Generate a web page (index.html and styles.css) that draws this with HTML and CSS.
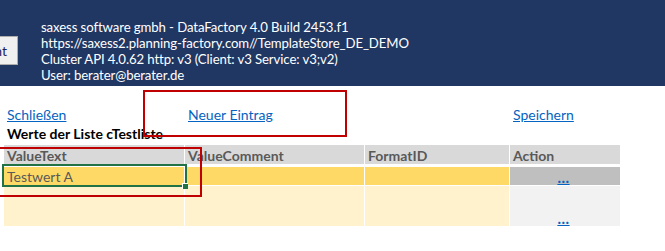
FILE: index.html
```html
<!DOCTYPE html>
<html lang="de">
<head>
    <meta charset="UTF-8">
    <title>DataFactory - Werte der Liste</title>
    <link rel="stylesheet" href="styles.css">
</head>
<body>
    <div class="banner">
        <button class="menu-btn">nt</button>
        <div class="info">
            <div>saxess software gmbh - DataFactory 4.0 Build 2453.f1</div>
            <div>https://saxess2.planning-factory.com//TemplateStore_DE_DEMO</div>
            <div>Cluster API 4.0.62 http: v3 (Client: v3 Service: v3;v2)</div>
            <div>User: berater@berater.de</div>
        </div>
    </div>

    <div class="sheet">
        <div class="grid links">
            <div class="cell"><a href="#">Schließen</a></div>
            <div class="cell"><a href="#">Neuer Eintrag</a></div>
            <div class="cell"></div>
            <div class="cell"><a href="#">Speichern</a></div>
        </div>
        <div class="title">Werte der Liste cTestliste</div>

        <div class="grid head">
            <div class="cell">ValueText</div>
            <div class="cell">ValueComment</div>
            <div class="cell">FormatID</div>
            <div class="cell">Action</div>
        </div>
        <div class="grid row row-active">
            <div class="cell selected">Testwert A</div>
            <div class="cell"></div>
            <div class="cell"></div>
            <div class="cell action"><a href="#">...</a></div>
        </div>
        <div class="grid row row-tall">
            <div class="cell"></div>
            <div class="cell"></div>
            <div class="cell"></div>
            <div class="cell action"><a href="#">...</a></div>
        </div>

        <!-- Markierungen -->
        <div class="mark mark-new"></div>
        <div class="mark mark-value"></div>
    </div>
</body>
</html>
```

FILE: styles.css
```css
body { margin: 0; font-family: Lato, "Open Sans", sans-serif; font-size: 13px; background: #fff; overflow: hidden; }
a { color: #0563c1; text-decoration: underline; }

.banner { background: #203764; height: 86px; display: flex; align-items: flex-start; }
.menu-btn { margin: 36px 0 0 -40px; width: 58px; height: 29px; padding: 0 10px 0 0; text-align: right; background: #f0f0f0; border: 1px solid #adadad; color: #1f1f5f; font-family: inherit; font-size: 14px; }
.info { color: #fff; padding: 19px 0 0 23px; line-height: 16px; font-size: 13.2px; letter-spacing: -0.1px; }

.sheet { position: relative; padding-left: 4px; height: 165px; }
.grid { display: grid; grid-template-columns: 180px 179px 144px 110px; column-gap: 1px; }
.cell { padding: 0 3px; display: flex; align-items: flex-end; white-space: nowrap; }

.links { height: 38px; font-size: 14px; }
.links .cell { padding-bottom: 1px; }
.title { height: 21px; font-weight: bold; font-size: 14px; color: #000; padding-left: 3px; line-height: 20px; }

.head { height: 19px; margin-bottom: 3px; font-weight: bold; font-size: 14px; color: #595959; }
.head .cell { background: #d9d9d9; }
.row { margin-bottom: 1px; font-size: 14px; color: #595959; }
.row-active { height: 18px; }
.row-active .cell { background: #ffd966; }
.row-tall { height: 40px; }
.row-tall .cell { background: #fff2cc; }
.row-active .action { background: #bfbfbf; }
.row-tall .action { background: #f2f2f2; }
.action { justify-content: center; padding-left: 0; }
.action a { font-size: 15px; font-weight: bold; line-height: 15px; letter-spacing: 0.5px; }

.selected { position: relative; }
.selected::after { content: ""; position: absolute; left: -2px; top: -3px; right: -3px; bottom: -2px; border: 2px solid #217346; }
.selected::before { content: ""; position: absolute; right: -4px; bottom: -4px; width: 5px; height: 5px; background: #217346; border-left: 1px solid #fff; border-top: 1px solid #fff; z-index: 1; }

.mark { position: absolute; border: 2px solid #c00000; }
.mark-new { left: 143px; top: 4px; width: 200px; height: 43px; }
.mark-value { left: -10px; top: 61px; width: 208px; height: 46px; }
```
